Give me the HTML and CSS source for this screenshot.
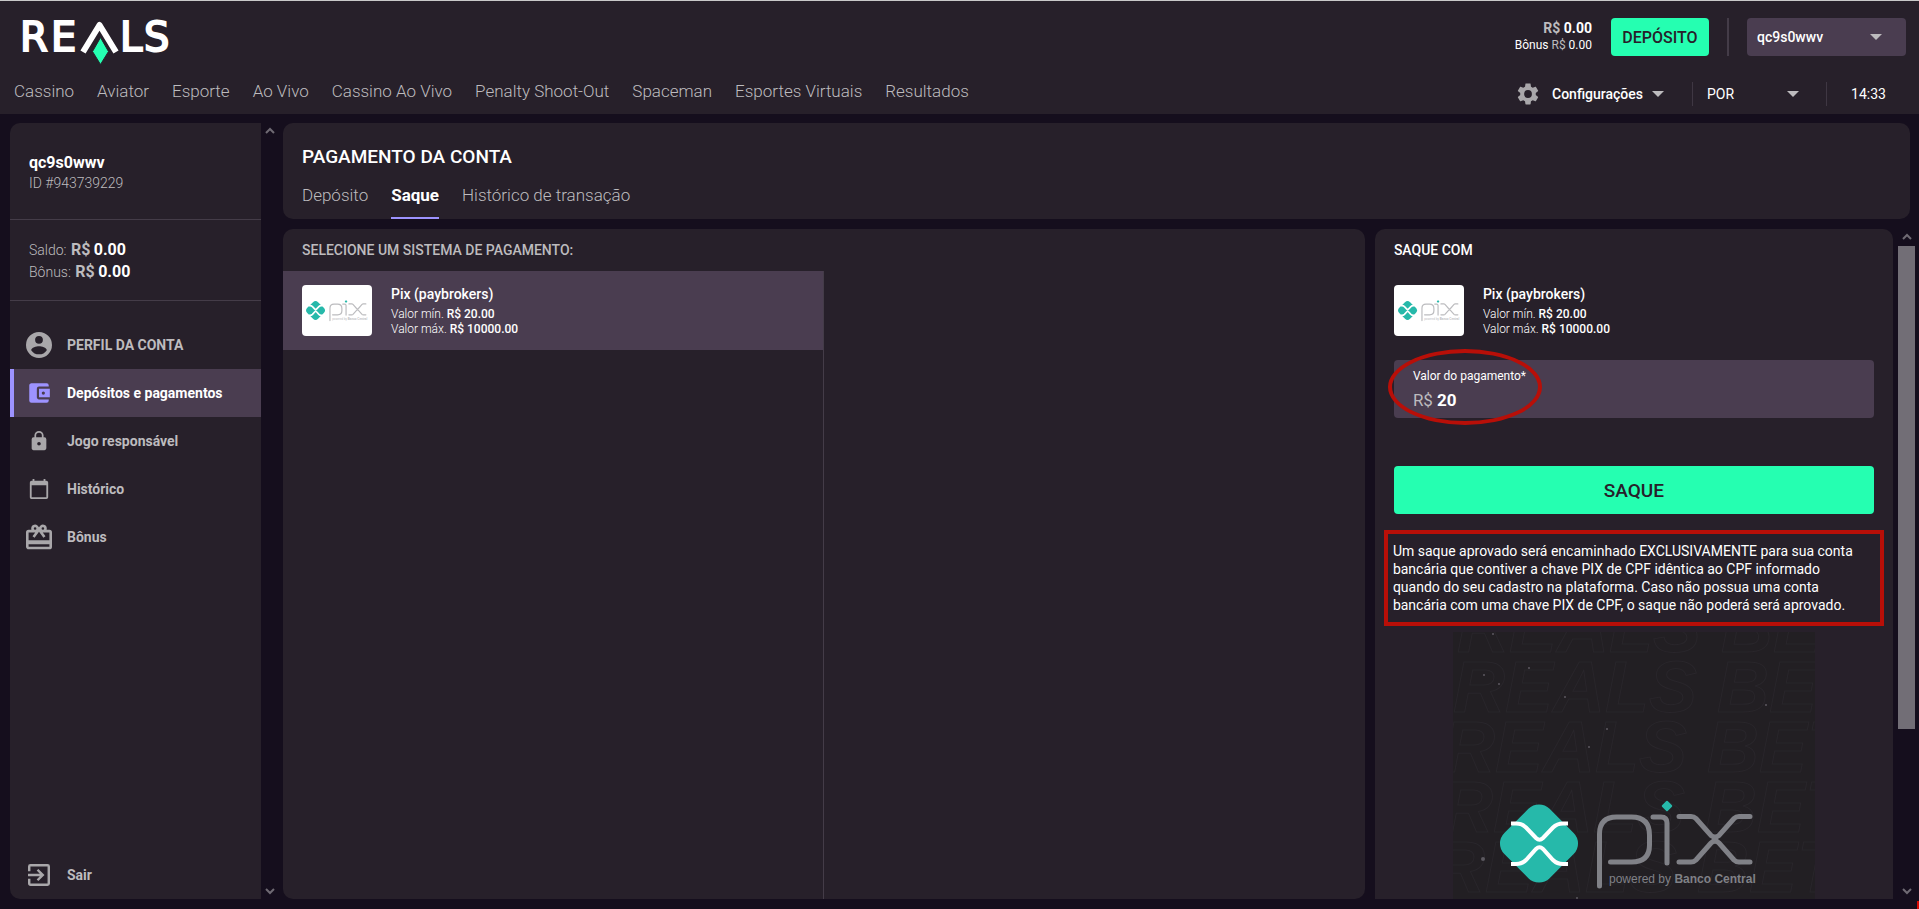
FILE: index.html
```html
<!DOCTYPE html>
<html lang="pt-BR">
<head>
<meta charset="utf-8">
<meta name="viewport" content="width=device-width, initial-scale=1">
<title>Reals - Pagamento da conta</title>
<link rel="stylesheet" href="styles.css">
</head>
<body>
<svg class="defs" aria-hidden="true">
  <symbol id="pix-logo" viewBox="0 0 260 92">
    <rect class="pix-teal" x="8" y="11.5" width="64" height="64" rx="15" transform="rotate(45 40 43.5)"/>
    <path class="pix-cut" d="M12 23.5h5q6 0 10 4l10 10.5q3.500 3.500 7 0l10-10.500q4-4 10-4h5M12 64h5q6 0 10-4l10-11q3.500-3.500 7 0l10 11q4 4 10 4h5"/>
    <path class="pix-line" d="M100.500 86V34q0-17 17-17h15q18 0 18 18v10q0 17-18 17h-21M154 17h8q6 0 6 6v40M180 16.500h12q3 0 5 2l15 17q4 3 8 0l15-17q2-2 5-2h11M180 62h12q3 0 5-2l15-17q4-4 8 0l15 17q2 2 5 2h11"/>
    <rect class="pix-teal" x="164" y="2" width="8" height="8" rx="1" transform="rotate(45 168 6)"/>
    <text class="pix-tag" x="110" y="83">powered by <tspan class="pix-bank">Banco Central</tspan></text>
  </symbol>
</svg>

<header class="topbar">
  <div class="topbar-row topbar-main">
    <a class="logo" href="#" aria-label="Reals">
      <svg width="156" height="48" viewBox="0 0 156 48" aria-hidden="true">
        <text class="logo-text" x="0 31" y="32">RE</text>
        <path class="logo-roof" d="M63 33L79.500 6L96 33"/>
        <path class="logo-gem" d="M80.500 18.500l8 14-8 13-8-13z"/>
        <text class="logo-text" x="100 124" y="32">LS</text>
      </svg>
    </a>
    <div class="account-tools">
      <div class="balance">
        <div class="balance-main"><span class="cur">R$</span> 0.00</div>
        <div class="balance-bonus">Bônus <span class="cur">R$</span> 0.00</div>
      </div>
      <button class="btn-deposit" type="button">DEPÓSITO</button>
      <span class="rule-tall"></span>
      <div class="select-box user-select">
        <select aria-label="Conta"><option>qc9s0wwv</option></select>
        <span class="caret"></span>
      </div>
    </div>
  </div>
  <div class="topbar-row topbar-nav">
    <nav class="nav" aria-label="Principal">
      <a href="#">Cassino</a><a href="#">Aviator</a><a href="#">Esporte</a><a href="#">Ao Vivo</a><a href="#">Cassino Ao Vivo</a><a href="#">Penalty Shoot-Out</a><a href="#">Spaceman</a><a href="#">Esportes Virtuais</a><a href="#">Resultados</a>
    </nav>
    <div class="settings">
      <button class="config" type="button">
        <svg width="26" height="26" viewBox="0 0 24 24" aria-hidden="true"><path d="M19.140 12.940c.04-.3.06-.61.06-.94s-.02-.64-.07-.94l2.030-1.580c.18-.14.23-.41.12-.61l-1.920-3.320c-.12-.22-.37-.29-.59-.22l-2.390.96c-.5-.38-1.030-.7-1.620-.94L14.400 2.810c-.04-.24-.24-.41-.48-.41h-3.840c-.24 0-.43.17-.47.41L9.250 5.350c-.59.24-1.130.57-1.620.94l-2.390-.96c-.22-.08-.47 0-.59.22L2.740 8.870c-.12.21-.08.47.12.61l2.030 1.580c-.05.3-.09.63-.09.94s.02.64.07.94l-2.030 1.580c-.18.14-.23.41-.12.61l1.920 3.320c.12.22.37.29.59.22l2.390-.96c.5.38 1.030.7 1.620.94l.36 2.540c.05.24.24.41.48.41h3.840c.24 0 .44-.17.47-.41l.36-2.540c.59-.24 1.130-.56 1.620-.94l2.390.96c.22.08.47 0 .59-.22l1.920-3.320c.12-.22.07-.47-.12-.61zM12 15.600A3.600 3.600 0 1 1 12 8.400a3.600 3.600 0 0 1 0 7.200z"/></svg>
        <span>Configurações</span><span class="caret"></span>
      </button>
      <div class="select-box lang-select">
        <select aria-label="Idioma"><option>POR</option></select>
        <span class="caret"></span>
      </div>
      <time class="clock">14:33</time>
    </div>
  </div>
</header>

<div class="layout">
  <aside class="sidebar">
    <div class="user">
      <div class="user-name">qc9s0wwv</div>
      <div class="user-id">ID #943739229</div>
    </div>
    <div class="funds">
      <div>Saldo: <b class="cur">R$</b> <b>0.00</b></div>
      <div>Bônus: <b class="cur">R$</b> <b>0.00</b></div>
    </div>
    <nav class="menu" aria-label="Conta">
      <a href="#"><svg class="ico-lg" viewBox="2 2 20 20" aria-hidden="true"><path d="M12 2a10 10 0 1 0 0 20 10 10 0 0 0 0-20zm0 3a3 3 0 1 1 0 6 3 3 0 0 1 0-6zm0 14.200a7.200 7.200 0 0 1-6-3.220c.03-1.990 4-3.080 6-3.080s5.970 1.090 6 3.080a7.200 7.200 0 0 1-6 3.220z"/></svg>PERFIL DA CONTA</a>
      <a class="active" href="#" aria-current="page"><svg viewBox="0 0 24 24" aria-hidden="true"><path d="M21 18v1a2 2 0 0 1-2 2H5a2 2 0 0 1-2-2V5c0-1.100.9-2 2-2h14a2 2 0 0 1 2 2v1h-9a2 2 0 0 0-2 2v8c0 1.100.9 2 2 2h9zm-9-2h10V8H12v8zm4-2.500a1.500 1.500 0 1 1 0-3 1.500 1.500 0 0 1 0 3z"/></svg>Depósitos e pagamentos</a>
      <a href="#"><svg viewBox="0 0 24 24" aria-hidden="true"><path d="M18 8h-1V6A5 5 0 0 0 7 6v2H6a2 2 0 0 0-2 2v10c0 1.100.9 2 2 2h12a2 2 0 0 0 2-2V10a2 2 0 0 0-2-2zm-6 9a2 2 0 1 1 0-4 2 2 0 0 1 0 4zm3.100-9H8.900V6a3.100 3.100 0 0 1 6.200 0v2z"/></svg>Jogo responsável</a>
      <a href="#"><svg viewBox="0 0 24 24" aria-hidden="true"><path d="M20 3h-1V1h-2v2H7V1H5v2H4a2 2 0 0 0-2 2v16c0 1.100.9 2 2 2h16a2 2 0 0 0 2-2V5a2 2 0 0 0-2-2zm0 18H4V8h16v13z"/></svg>Histórico</a>
      <a href="#"><svg class="ico-lg" viewBox="2 2 20 19" aria-hidden="true"><path d="M20 6h-2.180c.11-.31.18-.65.18-1a3 3 0 0 0-5.500-1.650l-.5.670-.5-.680A3 3 0 0 0 6 5c0 .35.070.69.180 1H4a2 2 0 0 0-2 2v11c0 1.110.89 2 2 2h16a2 2 0 0 0 2-2V8a2 2 0 0 0-2-2zm-5-2a1 1 0 1 1 0 2 1 1 0 0 1 0-2zM9 4a1 1 0 1 1 0 2 1 1 0 0 1 0-2zm11 15H4v-2h16v2zm0-5H4V8h5.080L7 10.830 8.620 12 12 7.400l3.380 4.600L17 10.830 14.920 8H20v6z"/></svg>Bônus</a>
      <a class="logout" href="#"><svg viewBox="3 3 18 18" aria-hidden="true"><path d="M10.090 15.590L11.500 17l5-5-5-5-1.410 1.410L12.670 11H3v2h9.670l-2.580 2.590zM19 3H5a2 2 0 0 0-2 2v4h2V5h14v14H5v-4H3v4c0 1.100.9 2 2 2h14a2 2 0 0 0 2-2V5a2 2 0 0 0-2-2z"/></svg>Sair</a>
    </nav>
  </aside>
  <div class="scroll side-scroll" aria-hidden="true">
    <svg viewBox="0 0 10 8"><path d="M1 6l4-4 4 4"/></svg>
    <svg viewBox="0 0 10 8"><path d="M1 2l4 4 4-4"/></svg>
  </div>

  <main class="content">
    <section class="card heading">
      <h1>PAGAMENTO DA CONTA</h1>
      <nav class="tabs" aria-label="Pagamentos">
        <a href="#">Depósito</a><a class="active" href="#" aria-current="page">Saque</a><a href="#">Histórico de transação</a>
      </nav>
    </section>
    <div class="panels">
      <section class="card methods">
        <h2>SELECIONE UM SISTEMA DE PAGAMENTO:</h2>
        <div class="method-list">
          <button class="method selected" type="button">
            <span class="pix-card"><svg><use href="#pix-logo"/></svg></span>
            <span class="method-info">
              <strong>Pix (paybrokers)</strong>
              <span>Valor mín. <em>R$ 20.00</em></span>
              <span>Valor máx. <em>R$ 10000.00</em></span>
            </span>
          </button>
        </div>
      </section>
      <section class="card withdraw">
        <h2>SAQUE COM</h2>
        <div class="method">
          <span class="pix-card"><svg><use href="#pix-logo"/></svg></span>
          <span class="method-info">
            <strong>Pix (paybrokers)</strong>
            <span>Valor mín. <em>R$ 20.00</em></span>
            <span>Valor máx. <em>R$ 10000.00</em></span>
          </span>
        </div>
        <form class="form">
          <div class="field">
            <label for="amount">Valor do pagamento*</label>
            <div class="amount"><span>R$</span><input id="amount" type="text" value="20"></div>
            <span class="mark-oval"></span>
          </div>
          <button class="btn-withdraw" type="button">SAQUE</button>
        </form>
        <p class="notice">Um saque aprovado será encaminhado EXCLUSIVAMENTE para sua conta bancária que contiver a chave PIX de CPF idêntica ao CPF informado quando do seu cadastro na plataforma. Caso não possua uma conta bancária com uma chave PIX de CPF, o saque não poderá será aprovado.<span class="mark-box"></span></p>
        <svg class="banner" width="362" height="362" viewBox="0 0 362 362" role="img" aria-label="Pix powered by Banco Central">
          <rect class="banner-bg" width="362" height="362"/>
          <g class="banner-words">
            <text x="4" y="20">REALS BET</text>
            <text x="0" y="80">REALS BET</text>
            <text x="-10" y="140">REALS BET</text>
            <text x="-12" y="200">REALS BET</text>
            <text x="-20" y="260">REALS BET</text>
          </g>
          <g class="banner-dust">
            <circle cx="76" cy="36" r="1"/><circle cx="31" cy="43" r="1"/><circle cx="46" cy="52" r="1"/><circle cx="112" cy="65" r="1"/><circle cx="313" cy="73" r="1"/><circle cx="136" cy="115" r="1"/><circle cx="154" cy="97" r="1"/><circle cx="40" cy="2" r="1"/><circle cx="30" cy="227" r="2"/><circle cx="124" cy="266" r="1"/>
          </g>
          <use href="#pix-logo" x="46" y="168" width="260" height="92"/>
        </svg>
      </section>
      <div class="scroll panel-scroll" aria-hidden="true">
        <svg viewBox="0 0 10 8"><path d="M1 6l4-4 4 4"/></svg>
        <div class="track"><div class="thumb"></div></div>
        <svg viewBox="0 0 10 8"><path d="M1 2l4 4 4-4"/></svg>
      </div>
    </div>
  </main>
</div>
<span class="mark-corner"></span>
</body>
</html>
```
FILE: styles.css
```css
* { box-sizing: border-box; }

body {
  margin: 0;
  height: 100vh;
  display: flex;
  flex-direction: column;
  overflow: hidden;
  background: #150e1d;
  color: #fff;
  font-family: Roboto, "Liberation Sans", sans-serif;
  font-size: 14px;
}

a { color: inherit; text-decoration: none; }
button, input, select { font: inherit; color: inherit; border: 0; background: none; padding: 0; margin: 0; }
button { cursor: pointer; }
h1, h2, p { margin: 0; }
.defs { position: absolute; width: 0; height: 0; }
.cur { color: #bdbbbe; }

/* Top bar */
.topbar {
  flex: none;
  background: #27202a;
  border-top: 1px solid #c9c9c9;
}
.topbar-row { display: flex; justify-content: space-between; align-items: center; }
.topbar-main { height: 72px; padding: 0 13px 0 20px; }
.topbar-nav { height: 41px; padding: 0 13px 4px 14px; }
.logo { display: block; height: 48px; margin-top: 12px; }
.logo svg { display: block; overflow: visible; }
.logo-text {
  fill: #fff;
  stroke: #fff;
  stroke-width: 2px;
  font-family: "DejaVu Sans", sans-serif;
  font-size: 40px;
}
.logo-roof { fill: none; stroke: #fff; stroke-width: 6px; stroke-linejoin: round; }
.logo-gem { fill: #25ffb1; stroke: #27202a; stroke-width: 1px; }

.account-tools { display: flex; align-items: center; }
.balance { text-align: right; font-size: 12px; line-height: 17px; margin-right: 19px; }
.balance-main { font-size: 14px; font-weight: 700; }
.btn-deposit {
  width: 98px;
  height: 38px;
  border-radius: 4px;
  background: #25ffb1;
  color: #27202a;
  font-size: 16px;
  font-weight: 500;
}
.rule-tall { width: 2px; height: 38px; margin: 0 18px; background: #443c48; }
.select-box { position: relative; }
.select-box select { appearance: none; width: 100%; height: 100%; outline: 0; }
.select-box .caret { position: absolute; right: 24px; top: 50%; margin-top: -3px; pointer-events: none; }
.user-select { width: 159px; height: 38px; border-radius: 4px; background: #4a3d50; }
.user-select select { padding-left: 10px; font-weight: 500; }
.caret {
  display: inline-block;
  border: 6px solid transparent;
  border-top-color: #bdbbbe;
  border-bottom: 0;
}

.nav { display: flex; gap: 23px; margin-bottom: 1px; color: #bdbbbe; font-size: 17px; font-weight: 300; }
.settings { display: flex; align-items: center; height: 24px; margin-top: 4px; }
.config { display: flex; align-items: center; font-weight: 500; margin-right: 28px; }
.config svg { fill: #a9a7aa; margin-right: 11px; }
.config .caret { margin-left: 9px; }
.lang-select { width: 135px; height: 24px; border: solid #3f3743; border-width: 0 1px; }
.lang-select select { padding-left: 14px; }
.lang-select .caret { right: 27px; }
.clock { width: 79px; padding-left: 4px; text-align: center; }

/* Page frame */
.layout { flex: 1; min-height: 0; display: flex; padding: 9px 9px 10px 10px; }

.sidebar {
  flex: none;
  width: 251px;
  display: flex;
  flex-direction: column;
  border-radius: 10px 0 0 10px;
  background: #27202a;
}
.user { height: 97px; padding: 29px 19px 0; border-bottom: 1px solid #443c48; }
.user-name { font-size: 16px; line-height: 22px; font-weight: 700; }
.user-id { line-height: 18px; font-weight: 300; color: #bdbbbe; }
.funds { height: 81px; padding: 19px 19px 0; border-bottom: 1px solid #443c48; line-height: 21px; font-weight: 300; color: #bdbbbe; }
.funds b { font-size: 16px; font-weight: 700; color: #fff; }
.funds b.cur { margin-left: 1px; color: #bdbbbe; }
.menu { flex: 1; display: flex; flex-direction: column; padding-top: 20px; font-weight: 700; color: #bdbbbe; }
.menu a { display: flex; align-items: center; height: 48px; padding-left: 16px; gap: 15px; border-left: 0 solid #9d93ff; }
.menu svg { width: 22px; height: 22px; margin: 0 2px; fill: #a9a7aa; }
.menu .ico-lg { width: 26px; height: 26px; margin: 0; }
.menu a.active { padding-left: 12px; border-left-width: 4px; background: #4a3d50; color: #fff; }
.menu a.active svg { fill: #9d93ff; width: 26px; height: 26px; margin: 0; }
.menu .logout { margin-top: auto; }

.scroll { flex: none; display: flex; flex-direction: column; justify-content: space-between; align-items: center; }
.scroll svg { width: 10px; height: 8px; fill: none; stroke: #6f6a73; stroke-width: 2px; }
.side-scroll { width: 17px; padding: 4px 0; margin-right: 5px; }

/* Content */
.content { flex: 1; min-width: 0; display: flex; flex-direction: column; gap: 10px; }
.card { background: #27202a; border-radius: 10px; }
.heading { height: 96px; padding: 22px 19px 0; }
h1 { font-size: 19px; line-height: 24px; font-weight: 500; }
.tabs { display: flex; gap: 23px; margin-top: 12px; color: #bdbbbe; font-size: 17px; line-height: 28px; font-weight: 300; }
.tabs a { height: 38px; }
.tabs .active { color: #fff; font-weight: 700; border-bottom: 2px solid #9d93ff; }

.panels { flex: 1; min-height: 0; display: flex; }
h2 { font-size: 14px; line-height: 42px; font-weight: 500; padding-left: 19px; }
.methods { flex: 1; display: flex; flex-direction: column; margin-right: 10px; }
.methods h2 { color: #bdbbbe; }
.method-list { flex: 1; width: 50%; border-right: 1px solid #443c48; }
.method { display: flex; align-items: center; gap: 19px; width: 100%; height: 79px; padding-left: 19px; text-align: left; }
.method.selected { background: #4a3d50; }
.pix-card { display: flex; align-items: center; justify-content: center; width: 70px; height: 51px; border-radius: 4px; background: #fff; }
.pix-card svg { width: 62px; height: 22px; --pix-gray: #bcbcbf; --pix-cut: 7px; }
.method-info { display: flex; flex-direction: column; font-size: 12px; line-height: 15px; font-weight: 300; }
.method-info strong { margin-bottom: 3px; font-size: 14px; line-height: 20px; font-weight: 500; }
.method-info em { font-style: normal; font-weight: 500; }

.withdraw { flex: none; width: 27vw; overflow: hidden; border-radius: 10px 10px 0 0; }
.form { padding: 10px 19px 0; }
.field { position: relative; height: 58px; padding: 9px 19px 0; border-radius: 4px; background: #4a3d50; }
.field label { display: block; font-size: 12px; line-height: 14px; }
.amount { display: flex; gap: 4px; margin-top: 6px; font-size: 17px; line-height: 22px; color: #bdbbbe; }
.amount input { flex: 1; min-width: 0; color: #fff; font-weight: 700; outline: 0; }
.btn-withdraw { width: 100%; height: 48px; margin-top: 48px; border-radius: 4px; background: #25ffb1; color: #27202a; font-size: 19px; font-weight: 500; }
.notice { position: relative; margin: 28px 18px 0; padding-right: 12px; line-height: 18px; }
.mark-oval { position: absolute; left: -6px; top: -11px; width: 154px; height: 76px; border: 4px solid #b80f08; border-radius: 50%; pointer-events: none; }
.mark-box { position: absolute; inset: -12px -9px; border: 4px solid #b80f08; pointer-events: none; }
.mark-corner { position: absolute; right: 0; bottom: 0; width: 2px; height: 8px; background: #d80a05; }

.banner { display: block; margin: 18px auto 0; }
.banner-bg { fill: #221f23; }
.banner-words { fill: none; stroke: #29262b; stroke-width: 1px; font: italic 700 72px "Liberation Sans", sans-serif; }
.banner-dust { fill: #5c5960; }

.pix-teal { fill: #26b9aa; }
.pix-cut { fill: none; stroke: #fff; stroke-width: var(--pix-cut, 4px); }
.pix-line { fill: none; stroke: var(--pix-gray, #808187); stroke-width: 5px; stroke-linecap: round; }
.pix-tag { fill: var(--pix-gray, #808187); font: 12px "Liberation Sans", sans-serif; }
.pix-bank { font-weight: 700; }

.panel-scroll { width: 17px; margin: 0 -5px 0 5px; padding: 4px 0; }
.track { flex: 1; width: 100%; margin: 5px 0; }
.thumb { height: 76%; background: #726e76; }
```
